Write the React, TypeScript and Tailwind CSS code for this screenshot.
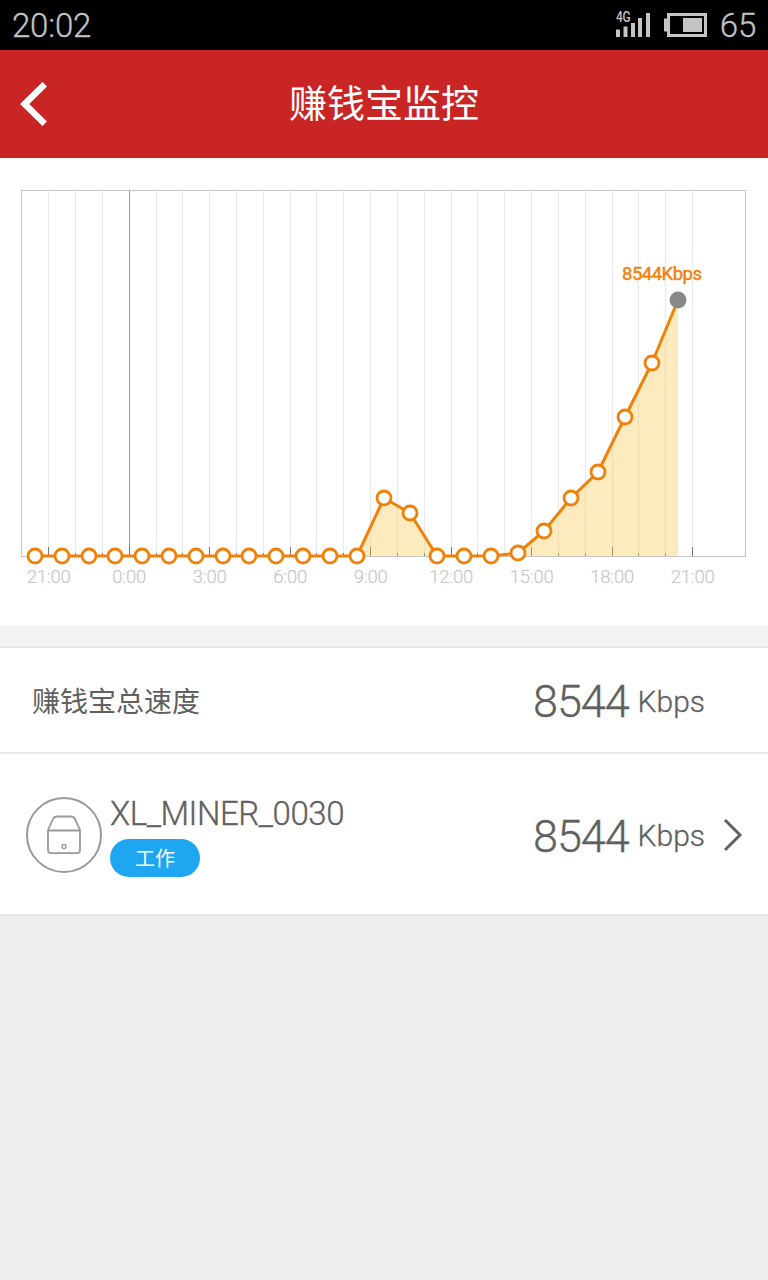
const GRID_START = 48.5;
const GRID_STEP = 26.83;
const BASE_Y = 556;

const points: [number, number][] = [
  [35, 556], [62, 556], [89, 556], [115, 556], [142, 556],
  [169, 556], [196, 556], [223, 556], [249, 556], [276, 556],
  [303, 556], [330, 556], [357, 556], [384, 498], [410, 513],
  [437, 556], [464, 556], [491, 556], [518, 553], [544, 531],
  [571, 498], [598, 472], [625, 417], [652, 363], [678, 300],
];

const hours = ["21:00", "0:00", "3:00", "6:00", "9:00", "12:00", "15:00", "18:00", "21:00"];

function StatusBar() {
  return (
    <div className="flex h-[50px] items-center justify-between bg-black px-3 text-[33px] font-light leading-none tracking-[-0.2px] text-[#c4c4c4]">
      <span className="mt-px [-webkit-text-stroke:0.3px]">20:02</span>
      <div className="flex items-center">
        <svg width="36" height="30" viewBox="0 0 36 30" fill="#c4c4c4" className="mr-[12px]">
          <text x="0" y="12" fontSize="14" fontWeight="500" textLength="14.5" lengthAdjust="spacingAndGlyphs">4G</text>
          <rect x="0" y="19.5" width="4" height="7.5" />
          <rect x="7.5" y="16.5" width="4" height="10.5" />
          <rect x="15" y="13" width="4" height="14" />
          <rect x="22" y="8" width="4" height="19" />
          <rect x="30" y="3" width="4" height="24" />
        </svg>
        <svg width="44" height="24" viewBox="0 0 44 24" className="mr-[12px]">
          <path d="M0 5.5h4v13H0z" fill="#c4c4c4" />
          <rect x="4.5" y="1.5" width="37" height="21" fill="none" stroke="#c4c4c4" strokeWidth="3" />
          <rect x="19" y="5" width="19" height="14" fill="#c4c4c4" />
        </svg>
        <span className="mt-px [-webkit-text-stroke:0.3px]">65</span>
      </div>
    </div>
  );
}

function Header() {
  return (
    <header className="grid h-[108px] grid-cols-[1fr_auto_1fr] items-center border-b border-[#b92a2a] bg-[#c92525] text-white">
      <button aria-label="返回" className="pl-5">
        <svg width="28" height="44" viewBox="0 0 28 44" fill="none" stroke="white" strokeWidth="6.5">
          <path d="M24.7 2.3 4.7 22l20 19.7" />
        </svg>
      </button>
      <h1 className="text-[38px] leading-none">赚钱宝监控</h1>
    </header>
  );
}

function SpeedChart() {
  const line = points.map((p) => p.join(",")).join(" ");
  const area = `${points[0][0]},${BASE_Y} ${line} 678,${BASE_Y}`;

  return (
    <svg width="768" height="468" viewBox="0 158 768 468" className="block bg-white">
      <rect x="21.5" y="190.5" width="724" height="366" fill="none" stroke="#c4c4c4" />
      {Array.from({ length: 25 }, (_, i) => {
        // snap to half pixels so the hairlines stay crisp
        const x = Math.floor(GRID_START + 0.2 + i * GRID_STEP) + 0.5;
        const isMidnight = i === 3;
        return (
          <g key={i}>
            <path d={`M${x} 191V556`} stroke={isMidnight ? "#999" : "#e8eaea"} />
            <path d={`M${x} ${i % 3 === 0 ? 547 : 553}V556`} stroke="#777" />
          </g>
        );
      })}
      <polygon points={area} fill="#fac748" fillOpacity="0.35" />
      <polyline points={line} fill="none" stroke="#f08008" strokeWidth="3" />
      {points.slice(0, -1).map(([x, y]) => (
        <circle key={x} cx={x} cy={y} r="7" fill="white" stroke="#f08008" strokeWidth="2.8" />
      ))}
      <circle cx="678" cy="300" r="8.5" fill="#888" />
      <text x="662" y="280" textAnchor="middle" fontSize="18.5" fill="#f08008" stroke="#f08008" strokeWidth="0.4" textLength="80">
        8544Kbps
      </text>
      {hours.map((label, i) => (
        <text
          key={i}
          x={GRID_START + 0.3 + i * GRID_STEP * 3}
          y="583"
          textAnchor="middle"
          fontSize="18.5"
          fontWeight="300"
          fill="#c8c8c8"
          stroke="#c8c8c8"
          strokeWidth="0.2"
          textLength={label.length === 5 ? 44 : 34}
        >
          {label}
        </text>
      ))}
    </svg>
  );
}

function Speed({ value }: { value: number }) {
  return (
    <div className="flex items-center gap-[9px] font-light leading-none [-webkit-text-stroke:0.3px]">
      <span className="text-[45px] tracking-[-1.1px]">{value}</span>
      <span className="text-[30px]">Kbps</span>
    </div>
  );
}

function MinerIcon() {
  return (
    <svg width="76" height="76" viewBox="0 0 76 76" fill="none" stroke="#999" className="shrink-0">
      <circle cx="38" cy="38" r="37" strokeWidth="2" />
      <path
        d="M22 33 27 22q1.200-2.500 4-2.500h14q2.800 0 4 2.500L54 33V53q0 3.200-3.200 3.200H25.200Q22 56.200 22 53zM22 32q0 1.500 1.500 1.500h29q1.500 0 1.500-1.500"
        strokeWidth="1.8"
      />
      <circle cx="38" cy="49.5" r="2" strokeWidth="1.3" />
    </svg>
  );
}

export default function App() {
  return (
    <div className="flex min-h-screen w-[768px] flex-col bg-[#efefef] font-[Roboto,'Noto_Sans_CJK_SC',sans-serif] text-[#606060]">
      <StatusBar />
      <Header />
      <SpeedChart />
      <div className="h-[22px] border-b-2 border-[#e7e7e7] bg-[#f3f3f3]" />

      <section className="flex h-[106px] items-center justify-between border-b-2 border-[#e7e7e7] bg-white pl-8 pr-[63px] pt-[3px]">
        <span className="pt-[2px] text-[28px] leading-none">赚钱宝总速度</span>
        <Speed value={8544} />
      </section>

      <section className="flex h-[162px] items-center border-b-2 border-[#e7e7e7] bg-white pl-[26px] pr-[25px] pt-[2px]">
        <MinerIcon />
        <div className="ml-2 flex flex-col items-start">
          <span className="pb-[5px] text-[33px] font-light leading-[41px] tracking-[-0.45px] [-webkit-text-stroke:0.3px]">
            XL_MINER_0030
          </span>
          <span className="flex h-[38px] w-[90px] items-center justify-center rounded-full bg-[#1ea7f0] pt-[2px] text-[20px] leading-none text-white">
            工作
          </span>
        </div>
        <div className="ml-auto flex items-center">
          <div className="pt-[2px]">
            <Speed value={8544} />
          </div>
          <svg width="20" height="34" viewBox="0 0 20 34" fill="none" stroke="#606060" strokeWidth="2.9" className="ml-[18px]">
            <path d="M2 2 17 17 2 32" />
          </svg>
        </div>
      </section>
    </div>
  );
}
